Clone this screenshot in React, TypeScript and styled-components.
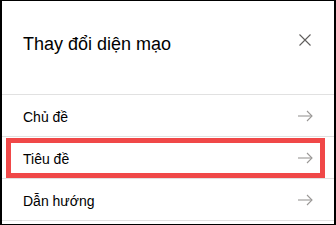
import React from "react";
import styled, { createGlobalStyle } from "styled-components";

const Global = createGlobalStyle`
  html, body { margin: 0; padding: 0; background: #fff; }
  body { font-family: "Liberation Sans", Arial, sans-serif; }
`;

const Frame = styled.div`
  width: 336px;
  height: 225px;
  box-sizing: border-box;
  border-style: solid;
  border-color: #000;
  border-width: 1px 2px 1px 2px;
  background: #fff;
  display: flex;
  flex-direction: column;
`;

const Header = styled.div`
  height: 93px;
  box-sizing: border-box;
  padding: 31px 23px 0 21px;
  display: flex;
  justify-content: space-between;
  align-items: flex-start;
`;

const Title = styled.h1`
  margin: 0;
  font-size: 18px;
  line-height: 24px;
  font-weight: 400;
  color: #000;
`;

const CloseButton = styled.button`
  margin-top: 2px;
  width: 12px;
  height: 12px;
  padding: 0;
  border: 0;
  background: none;
  display: flex;
  color: #605e5c;
`;

const List = styled.div`
  display: flex;
  flex-direction: column;
  border-bottom: 1px solid #e1e1e1;
`;

const Row = styled.div`
  position: relative;
  height: 42px;
  box-sizing: border-box;
  border-top: 1px solid #e1e1e1;
  padding: 0 21px 0 21px;
  display: flex;
  align-items: center;
  justify-content: space-between;
`;

const Label = styled.span`
  font-size: 14px;
  line-height: 18px;
  color: #000;
  padding-top: 3px;
`;

const Arrow = styled.span`
  display: flex;
  color: #9a9896;
`;

const Highlight = styled.div`
  position: absolute;
  top: 1px;
  bottom: 0;
  left: 4px;
  right: 9px;
  border: 5px solid #f04848;
  pointer-events: none;
`;

const ArrowIcon = () => (
  <svg width="15" height="12" viewBox="0 0 15 12" fill="none" stroke="currentColor" strokeWidth="1.1">
    <path d="M0 6 H14" />
    <path d="M9 1 L14 6 L9 11" />
  </svg>
);

const CloseIcon = () => (
  <svg width="12" height="12" viewBox="0 0 12 12" fill="none" stroke="currentColor" strokeWidth="1.1">
    <path d="M0.5 0.5 L11.5 11.5 M11.5 0.5 L0.5 11.5" />
  </svg>
);

const items = [
  { label: "Chủ đề", highlighted: false },
  { label: "Tiêu đề", highlighted: true },
  { label: "Dẫn hướng", highlighted: false },
];

export default function App() {
  return (
    <>
      <Global />
      <Frame>
        <Header>
          <Title>Thay đổi diện mạo</Title>
          <CloseButton aria-label="Đóng">
            <CloseIcon />
          </CloseButton>
        </Header>
        <List>
          {items.map((it) => (
            <Row key={it.label}>
              <Label>{it.label}</Label>
              <Arrow>
                <ArrowIcon />
              </Arrow>
              {it.highlighted && <Highlight />}
            </Row>
          ))}
        </List>
      </Frame>
    </>
  );
}
